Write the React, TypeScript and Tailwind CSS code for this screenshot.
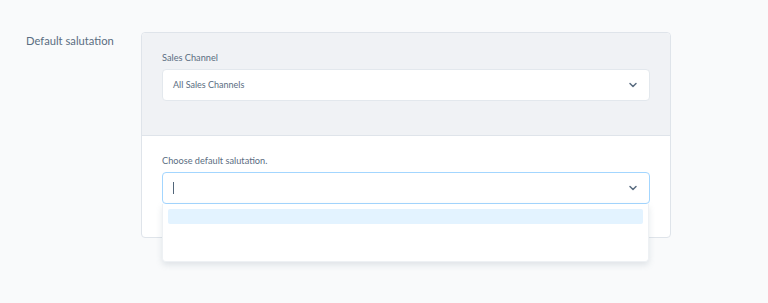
import { ChevronDown } from 'lucide-react';

function SelectBox({ children, focused }: { children?: React.ReactNode; focused?: boolean }) {
  return (
    <div
      className={`flex h-[32px] items-center justify-between rounded-[4px] border bg-white pl-[10px] pr-[10px] ${
        focused ? 'border-[#a3d6ff]' : 'border-[#e3e8ed]'
      }`}
    >
      <div className="flex items-center text-[9px] text-[#5a6d81]">{children}</div>
      <ChevronDown size={12} strokeWidth={3} className="text-[#5a6d81]" />
    </div>
  );
}

export default function App() {
  return (
    <div className="min-h-[303px] bg-[#f9fafb] pt-[32px] pl-[26px] font-[Lato,'Noto_Sans',sans-serif]">
      <div className="flex">
        <div className="w-[115px] pt-[1px] text-[11.2px] leading-[16px] text-[#5a6d81]">Default salutation</div>
        <div className="w-[530px] rounded-[4px] border border-[#dfe4ea] bg-white">
          <div className="rounded-t-[4px] border-b border-[#dfe4ea] bg-[#f0f2f5] px-[20px] pt-[17px] pb-[34px]">
            <div className="mb-[3px] text-[9.2px] leading-[16px] text-[#5a6d81]">Sales Channel</div>
            <SelectBox>All Sales Channels</SelectBox>
          </div>
          <div className="px-[20px] pt-[17px] pb-[33px]">
            <div className="mb-[3px] text-[9.2px] leading-[16px] text-[#5a6d81]">Choose default salutation.</div>
            <div className="relative">
              <SelectBox focused>
                <span className="inline-block h-[12px] w-[1px] bg-[#52667a]" />
              </SelectBox>
              <div className="absolute left-0 right-[1px] top-full h-[58px] rounded-b-[4px] border border-t-0 border-[#eef1f4] bg-white px-[5px] pt-[5px] shadow-[0_3px_6px_rgba(120,138,155,0.2)]">
                <div className="h-[15px] rounded-[2px] bg-[#e3f3ff]" />
              </div>
            </div>
          </div>
        </div>
      </div>
    </div>
  );
}
